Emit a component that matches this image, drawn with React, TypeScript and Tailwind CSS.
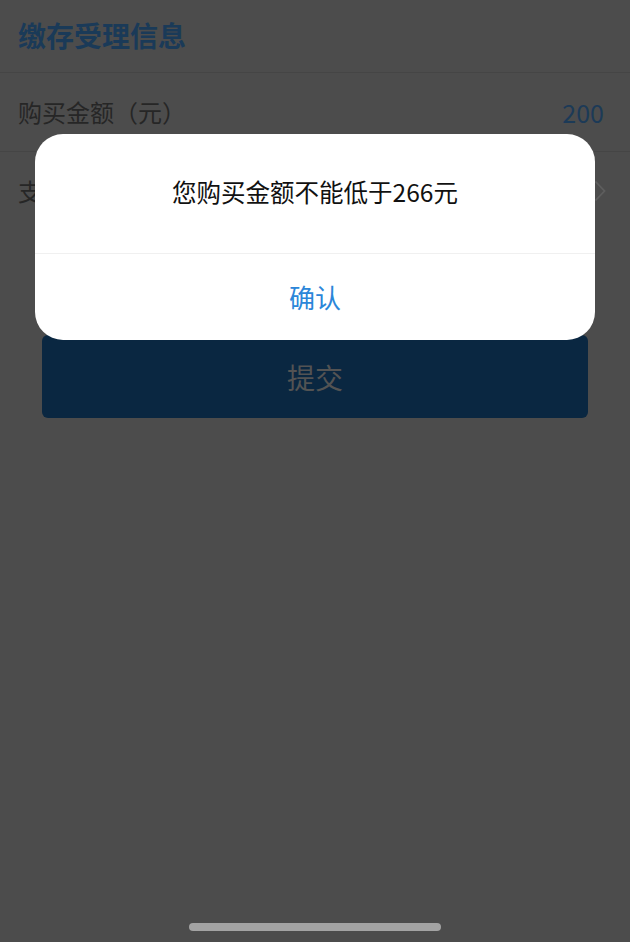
import React from 'react';

const App: React.FC = () => {
  return (
    <div className="relative h-[942px] w-[630px] overflow-hidden bg-[#4c4c4c] font-['Noto_Sans_CJK_SC','Noto_Sans',sans-serif]">
      {/* page under the mask */}
      <div className="flex h-[73px] items-center border-b border-[#454545] px-[18px] pb-[3px]">
        <h1 className="text-[28px] font-bold leading-none text-[#1a3a58]">缴存受理信息</h1>
      </div>
      <div className="flex h-[79px] items-center justify-between border-b border-[#454545] px-[18px]">
        <span className="text-[24px] leading-none text-[#262626]">购买金额（元）</span>
        <span className="pr-[8px] text-[25px] leading-none text-[#1c3a57]">200</span>
      </div>
      <div className="flex h-[78px] items-center justify-between px-[18px]">
        <span className="text-[24px] leading-none text-[#262626]">支付方式</span>
        <svg width="12" height="22" viewBox="0 0 12 22" className="mr-[6px]">
          <path d="M1.5 1.5 L10.5 11 L1.5 20.5" fill="none" stroke="#5e5e5e" strokeWidth="1.8" />
        </svg>
      </div>
      <div className="mx-[42px] mt-[105px] flex h-[83px] items-center justify-center rounded-md bg-[#0a2741]">
        <span className="text-[28px] leading-none text-[#535353]">提交</span>
      </div>

      {/* dialog */}
      <div className="absolute left-[35px] top-[134px] w-[560px] overflow-hidden rounded-[28px] bg-white">
        <div className="flex h-[119px] items-center justify-center pb-[3px]">
          <p className="text-[24.5px] leading-none text-[#111]">您购买金额不能低于266元</p>
        </div>
        <div className="flex h-[87px] items-center justify-center border-t border-[#f0f0f0]">
          <span className="text-[26px] leading-none text-[#2b86d9]">确认</span>
        </div>
      </div>

      {/* home indicator */}
      <div className="absolute left-[189px] top-[923px] h-[8px] w-[252px] rounded-full bg-[#a3a3a3]" />
    </div>
  );
};

export default App;
